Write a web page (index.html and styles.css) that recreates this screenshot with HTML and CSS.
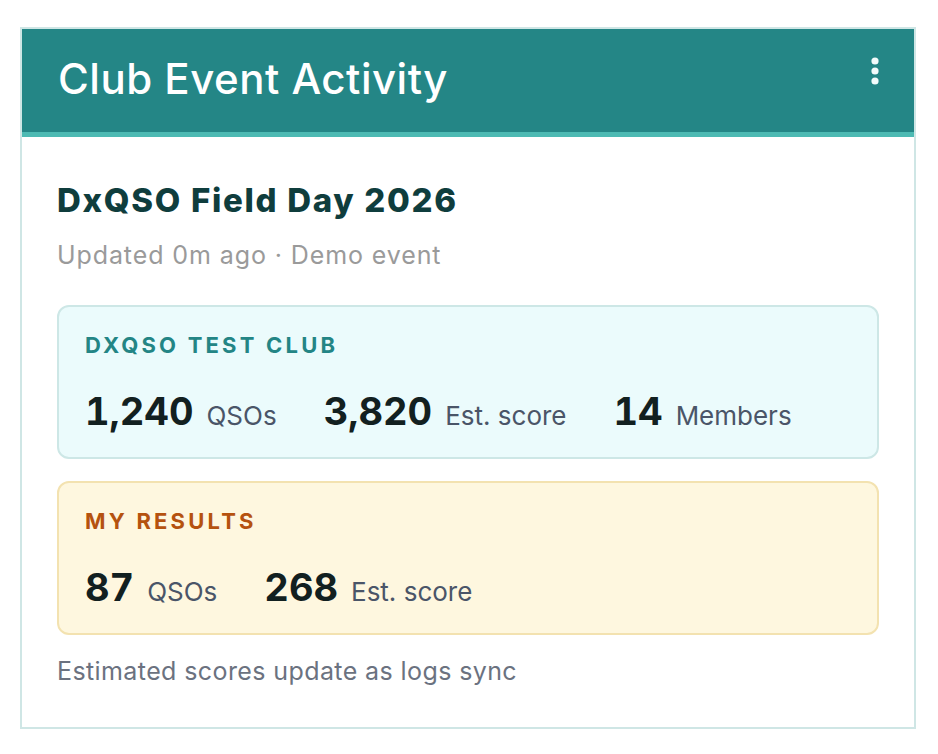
FILE: index.html
```html
<!DOCTYPE html>
<html lang="en">
<head>
<meta charset="utf-8">
<title>Club Event Activity</title>
<link rel="stylesheet" href="styles.css">
</head>
<body>
<section class="card">
  <header class="card-header">
    <h1 class="card-title">Club Event Activity</h1>
    <button class="menu-btn" aria-label="More options">
      <svg width="8" height="28" viewBox="0 0 8 28" aria-hidden="true">
        <circle cx="4" cy="4" r="3.6" fill="#f2fbfb"/>
        <circle cx="4" cy="14" r="3.6" fill="#f2fbfb"/>
        <circle cx="4" cy="24" r="3.6" fill="#f2fbfb"/>
      </svg>
    </button>
  </header>
  <div class="card-body">
    <h2 class="event-name">DxQSO Field Day 2026</h2>
    <p class="event-meta">Updated 0m ago · Demo event</p>

    <div class="stat-box club">
      <div class="stat-label">DXQSO TEST CLUB</div>
      <div class="stat-row">
        <div class="stat"><span class="value">1,240</span><span class="unit">QSOs</span></div>
        <div class="stat"><span class="value">3,820</span><span class="unit">Est. score</span></div>
        <div class="stat"><span class="value">14</span><span class="unit">Members</span></div>
      </div>
    </div>

    <div class="stat-box mine">
      <div class="stat-label">MY RESULTS</div>
      <div class="stat-row">
        <div class="stat"><span class="value">87</span><span class="unit">QSOs</span></div>
        <div class="stat"><span class="value">268</span><span class="unit">Est. score</span></div>
      </div>
    </div>

    <p class="footnote">Estimated scores update as logs sync</p>
  </div>
</section>
</body>
</html>
```
FILE: styles.css
```css
* { box-sizing: border-box; }

html, body {
  margin: 0;
  background: #ffffff;
}

body {
  padding: 27px 22px 0 20px;
  font-family: Inter, "Noto Sans", "Liberation Sans", sans-serif;
}

.card {
  width: 896px;
  border: 2px solid #cfe6e5;
  background: #ffffff;
}

.card-header {
  display: flex;
  justify-content: space-between;
  align-items: flex-start;
  background: #248686;
  border-bottom: 5px solid #4dbab3;
  padding: 25px 35px 28px 36px;
}

.card-title {
  margin: 0;
  font-size: 42px;
  line-height: 50px;
  font-weight: 500;
  color: #ffffff;
  letter-spacing: 0.5px;
}

.menu-btn {
  border: 0;
  padding: 0;
  margin-top: 3px;
  background: transparent;
  display: flex;
}

.card-body {
  padding: 44px 35px 41px 35px;
}

.event-name {
  margin: 0;
  font-size: 33px;
  line-height: 38px;
  font-weight: 800;
  letter-spacing: 1.7px;
  color: #0f3d3d;
}

.event-meta {
  margin: 21px 0 0;
  font-size: 25px;
  line-height: 30px;
  letter-spacing: 0.9px;
  color: #9a9a9a;
}

.stat-box {
  border: 2px solid;
  border-radius: 12px;
  padding: 25px 26px 23px;
}

.stat-box.club {
  margin-top: 35px;
  background: #ebfbfc;
  border-color: #cde7e6;
}

.stat-box.mine {
  margin-top: 22px;
  background: #fef7df;
  border-color: #f3e2b0;
}

.stat-label {
  font-size: 22px;
  line-height: 26px;
  font-weight: 700;
  letter-spacing: 3.2px;
}

.club .stat-label { color: #238585; }
.mine .stat-label { color: #b5520f; }

.stat-row {
  display: flex;
  align-items: baseline;
  gap: 47px;
  margin-top: 30px;
}

.stat {
  display: flex;
  align-items: baseline;
  gap: 13px;
}

.value {
  font-size: 38px;
  line-height: 46px;
  font-weight: 700;
  font-variant-numeric: tabular-nums;
  color: #122020;
}

.unit {
  font-size: 26px;
  line-height: 30px;
  color: #4a5568;
}

.footnote {
  margin: 21px 0 0;
  font-size: 25px;
  line-height: 30px;
  letter-spacing: 0.4px;
  color: #6b7280;
}
```
